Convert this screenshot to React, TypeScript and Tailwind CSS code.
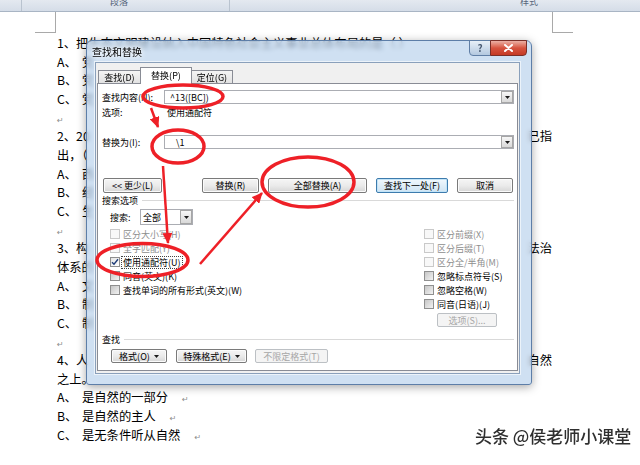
import React from "react";

// only what shows around the dialog is written out
type Line = { text?: string; right?: string; opt?: string; mark?: boolean };

const LINES: Line[] = [
  { text: "1、把生态文明建设纳入中国特色社会主义事业总体布局的是（  ）" },
  { opt: "A、", text: "党" },
  { opt: "B、", text: "党" },
  { opt: "C、", text: "党" },
  { mark: true },
  { text: "2、20", right: "已指" },
  { text: "出，（" },
  { opt: "A、", text: "西" },
  { opt: "B、", text: "经" },
  { opt: "C、", text: "生" },
  { mark: true },
  { text: "3、构", right: "法治" },
  { text: "体系的" },
  { opt: "A、", text: "文" },
  { opt: "B、", text: "制" },
  { opt: "C、", text: "制" },
  { mark: true },
  { text: "4、人", right: "自然" },
  { text: "之上。" },
  { opt: "A、", text: "是自然的一部分" },
  { opt: "B、", text: "是自然的主人" },
  { opt: "C、", text: "是无条件听从自然" },
];

function Ret({ className = "" }: { className?: string }) {
  return <span className={`font-['DejaVu_Sans',sans-serif] text-[8px] text-[#8c8c8c] ${className}`}>↵</span>;
}

function Caret() {
  return (
    <svg width="5" height="3" viewBox="0 0 5 3">
      <path d="M0 0H5L2.5 3Z" fill="#1a1a1a" />
    </svg>
  );
}

function DropBtn({ className = "" }: { className?: string }) {
  return (
    <div className={`w-[12px] border border-[#a6a6a6] bg-linear-to-b from-[#f7f7f7] to-[#d9d9d9] flex items-center justify-center ${className}`}>
      <Caret />
    </div>
  );
}

function Btn({ children, className = "", variant = "normal" }: { children: React.ReactNode; className?: string; variant?: "normal" | "default" | "disabled" }) {
  const v =
    variant === "disabled"
      ? "border-[#bcc0c4] bg-[#f4f4f4] text-[#a6a6a6]"
      : variant === "default"
      ? "border-[#3d7bad] bg-linear-to-b from-[#f1f8fd] to-[#cfe4f3] text-black shadow-[inset_0_0_0_1px_#c2e4f8]"
      : "border-[#7a7a7a] bg-linear-to-b from-[#f5f5f5] via-[#ebebeb] to-[#d6d6d6] text-black shadow-[inset_0_0_0_1px_#fbfbfb]";
  return <div className={`rounded-[2px] border flex items-center justify-center text-[9px] leading-none ${v} ${className}`}>{children}</div>;
}

function Check({ label, state = "off", focus = false }: { label: string; state?: "off" | "on" | "disabled"; focus?: boolean }) {
  const box =
    state === "disabled"
      ? "border-[#c9c9c9] bg-[#f8f8f8]"
      : state === "on"
      ? "border-[#8f8f8f] bg-linear-to-br from-[#e4e4e4] to-white"
      : "border-[#8f8f8f] bg-linear-to-br from-[#c6c6c6] to-[#f2f2f2]";
  return (
    <div className="h-[14px] flex items-center">
      <div className={`w-[10px] h-[10px] border flex items-center justify-center ${box}`}>
        {state === "on" && (
          <svg width="8" height="8" viewBox="0 0 8 8">
            <path d="M1 4.2L3 6.3L7 1.2" fill="none" stroke="#1f3d78" strokeWidth="1.4" />
          </svg>
        )}
      </div>
      <span
        className={`ml-[3px] text-[9px] leading-none ${state === "disabled" ? "text-[#8e8e8e]" : "text-black"} ${
          focus ? "outline outline-1 outline-dotted outline-[#444] outline-offset-[1px]" : ""
        }`}
      >
        {label}
      </span>
    </div>
  );
}

function Dialog() {
  return (
    <div className="absolute left-[86px] top-[40px] w-[446px] h-[345px] rounded-t-[6px] rounded-b-[3px] border border-[#5d7ea8] bg-[#bfd6ee]/75 backdrop-blur-[2px] shadow-[0_2px_10px_rgba(0,0,0,0.35)] flex flex-col pl-[8px] pr-[11px] pb-[10px]">
      {/* title bar */}
      <div className="h-[21px] flex items-start shrink-0">
        <span className="mt-[6px] ml-[-3px] text-[10px] leading-none text-black [text-shadow:0_0_4px_#fff,0_0_6px_#fff]">查找和替换</span>
        <div className="ml-auto -mr-[7px] -mt-[1px] flex h-[16px]">
          <div className="w-[22px] border border-[#5f7ea5] rounded-bl-[4px] bg-linear-to-b from-[#e8f0f8] to-[#b3c8df] flex items-center justify-center text-[10px] font-bold text-[#4b5d75] leading-none">
            ?
          </div>
          <div className="w-[37px] -ml-px border border-[#7a2f28] rounded-br-[4px] bg-linear-to-b from-[#eab0a5] via-[#d6533f] to-[#c53a24] flex items-center justify-center">
            <svg width="9" height="8" viewBox="0 0 9 8">
              <path d="M1 1L8 7M8 1L1 7" stroke="#fff" strokeWidth="2" strokeLinecap="round" />
            </svg>
          </div>
        </div>
      </div>

      {/* client */}
      <div className="flex-1 bg-[#f0f0f0] border border-[#8aa0bb] shadow-[0_0_0_1px_rgba(255,255,255,0.6)] flex flex-col">
        {/* tabs */}
        <div className="h-[20px] flex items-end pl-[2px] relative z-10 text-[9px] leading-none">
          <div className="w-[43px] h-[13px] border border-b-0 border-[#898c95] bg-linear-to-b from-[#f4f4f4] to-[#e2e2e2] flex items-center justify-center">查找(D)</div>
          <div className="w-[52px] h-[17px] -ml-px -mb-px border border-b-0 border-[#898c95] bg-white flex items-start justify-center pt-[3px]">替换(P)</div>
          <div className="w-[42px] h-[13px] -ml-px border border-b-0 border-[#898c95] bg-linear-to-b from-[#f4f4f4] to-[#e2e2e2] flex items-center justify-center">定位(G)</div>
        </div>

        {/* panel */}
        <div className="mx-[1px] border border-[#898c95] bg-white pl-[4px] pr-[3px] pb-[7px] flex flex-col text-[9px] leading-none text-black">
          <div className="mt-[6px] h-[14px] flex items-center">
            <span className="w-[62px]">查找内容(N):</span>
            <div className="flex-1 h-full border border-[#abadb3] bg-white flex items-stretch">
              <span className="self-center pl-[5px]">^13([BC])</span>
              <DropBtn className="ml-auto" />
            </div>
          </div>
          <div className="mt-[2px] h-[12px] flex items-center">
            <span className="w-[62px]">选项:</span>
            <span className="ml-[3px]">使用通配符</span>
          </div>
          <div className="mt-[17px] h-[14px] flex items-center">
            <span className="w-[62px]">替换为(I):</span>
            <div className="flex-1 h-full border border-[#abadb3] bg-white flex items-stretch">
              <span className="self-center pl-[11px]">\1</span>
              <DropBtn className="ml-auto" />
            </div>
          </div>

          <div className="mt-[29px] h-[15px] flex">
            <Btn className="w-[59px] ml-[1px]">{"<< 更少(L)"}</Btn>
            <div className="ml-auto mr-[1px] flex gap-[9px]">
              <Btn className="w-[57px]">替换(R)</Btn>
              <Btn className="w-[99px]">全部替换(A)</Btn>
              <Btn className="w-[72px]" variant="default">查找下一处(F)</Btn>
              <Btn className="w-[56px]">取消</Btn>
            </div>
          </div>

          <div className="mt-[1px] h-[12px] flex items-center">
            <span>搜索选项</span>
            <div className="flex-1 h-px bg-[#d9d9d9] ml-[4px]" />
          </div>

          <div className="mt-[3px] h-[16px] flex items-center ml-[8px]">
            <span className="w-[30px]">搜索:</span>
            <div className="w-[53px] h-full border border-[#abadb3] bg-white flex items-stretch">
              <span className="self-center pl-[2px]">全部</span>
              <DropBtn className="ml-auto" />
            </div>
          </div>

          <div className="mt-[2px] flex">
            <div className="ml-[8px] w-[314px] flex flex-col">
              <Check label="区分大小写(H)" state="disabled" />
              <Check label="全字匹配(Y)" state="disabled" />
              <Check label="使用通配符(U)" state="on" focus />
              <Check label="同音(英文)(K)" />
              <Check label="查找单词的所有形式(英文)(W)" />
            </div>
            <div className="flex flex-col">
              <Check label="区分前缀(X)" state="disabled" />
              <Check label="区分后缀(T)" state="disabled" />
              <Check label="区分全/半角(M)" state="disabled" />
              <Check label="忽略标点符号(S)" />
              <Check label="忽略空格(W)" />
              <Check label="同音(日语)(J)" />
              <Btn className="mt-[2px] ml-[13px] w-[60px] h-[14px]" variant="disabled">选项(S)...</Btn>
            </div>
          </div>

          <div className="mt-[6px] h-[12px] flex items-center">
            <span>查找</span>
            <div className="flex-1 h-px bg-[#d9d9d9] ml-[4px]" />
          </div>

          <div className="mt-[4px] h-[14px] flex gap-[8px] ml-[9px]">
            <Btn className="w-[56px] gap-[4px]">
              格式(O) <Caret />
            </Btn>
            <Btn className="w-[71px] ml-[1px] gap-[4px]">
              特殊格式(E) <Caret />
            </Btn>
            <Btn className="w-[73px]" variant="disabled">不限定格式(T)</Btn>
          </div>
        </div>
      </div>
    </div>
  );
}

function Marks() {
  return (
    <svg className="absolute left-0 top-0 pointer-events-none" width="640" height="465" viewBox="0 0 640 465">
      <defs>
        <marker id="head" markerUnits="userSpaceOnUse" markerWidth="12" markerHeight="10" refX="10" refY="5" orient="auto">
          <path d="M0 0L11 5L0 10Z" fill="#ee2027" />
        </marker>
      </defs>
      <g fill="none" stroke="#ee2027" strokeWidth="3.5">
        <ellipse cx="183" cy="96.5" rx="40" ry="11.5" />
        <ellipse cx="178" cy="146.5" rx="26" ry="16.5" />
        <ellipse cx="308" cy="182" rx="46" ry="25" />
        <ellipse cx="142.5" cy="260" rx="45.5" ry="16.5" />
      </g>
      <g stroke="#ee2027" strokeWidth="2.5">
        <line x1="151" y1="108" x2="158" y2="127" markerEnd="url(#head)" />
        <line x1="163" y1="166" x2="168" y2="243" markerEnd="url(#head)" />
        <line x1="200" y1="264" x2="262" y2="193" markerEnd="url(#head)" />
      </g>
    </svg>
  );
}

export default function App() {
  return (
    <div className="relative w-[640px] h-[465px] overflow-hidden bg-white font-['Noto_Sans_CJK_SC','Noto_Sans',sans-serif]">
      {/* ribbon edge */}
      <div className="h-[12px] bg-linear-to-b from-[#e4e9f0] to-[#d5dde8] border-b border-[#a9b5c4] flex overflow-hidden text-[9px] text-[#56647a] leading-none">
        <div className="w-[22px] border-r border-[#b9c3cf]" />
        <div className="w-[208px] border-r border-[#b9c3cf] flex">
          <span className="ml-[88px] -mt-[3px]">段落</span>
        </div>
        <div className="flex-1 flex">
          <span className="ml-[290px] -mt-[3px]">样式</span>
        </div>
      </div>

      {/* page corner marks */}
      <div className="h-[21px] flex">
        <div className="ml-[35px] w-[21px] h-full border-r border-b border-[#a9a9a9]" />
        <div className="ml-[496px] w-[21px] h-full border-l border-b border-[#a9a9a9]" />
      </div>

      {/* document text */}
      <div className="pl-[57px] w-[552px] pt-[1px] text-[12.3px] text-black">
        {LINES.map((l, i) => {
          if (l.mark)
            return (
              <div key={i} className="h-[18.67px] leading-[18.67px]">
                <Ret />
              </div>
            );
          if (l.opt)
            return (
              <div key={i} className="h-[18.67px] leading-[18.67px] whitespace-nowrap">
                <span className="inline-block w-[25px]">{l.opt}</span>
                {l.text}
                {l.text && l.text.length > 1 && <Ret className="ml-[14px]" />}
              </div>
            );
          return (
            <div key={i} className="h-[18.67px] leading-[18.67px] whitespace-nowrap flex justify-between">
              <span>{l.text}</span>
              {l.right && <span>{l.right}</span>}
            </div>
          );
        })}
      </div>

      <Dialog />
      <Marks />

      <div className="absolute left-[475px] top-[427px] text-[17px] leading-none font-medium text-[#2f2f2f] [text-shadow:0_0_2px_#fff,0_0_2px_#fff,0_0_3px_#fff]">
        头条 @侯老师小课堂
      </div>
    </div>
  );
}
